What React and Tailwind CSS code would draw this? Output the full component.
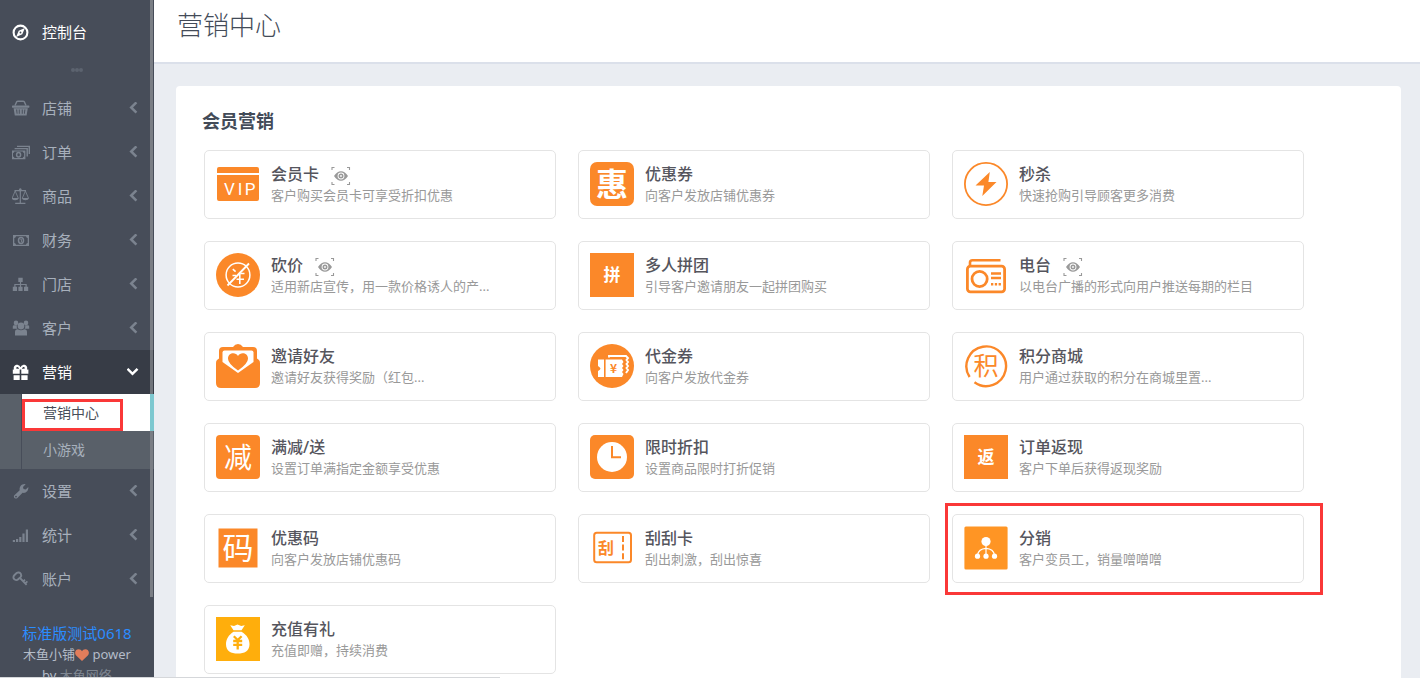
import React from 'react';

const cjk = '"Noto Sans CJK SC", sans-serif';

const Svg = ({ children, size = 18, className = '' }) => (
  <svg width={size} height={size} viewBox={`0 0 ${size} ${size}`} fill="currentColor" aria-hidden="true" className={`shrink-0 ${className}`}>
    {children}
  </svg>
);

/* ---------- sidebar icons, 18 x 18 ---------- */
const CompassIcon = () => (
  <Svg>
    <circle cx="8.5" cy="9.5" r="6.9" fill="none" stroke="currentColor" strokeWidth="2.1" />
    <path fillRule="evenodd" d="M12.9 5.1 10.3 11.3 4.1 13.9 6.7 7.7ZM8.5 8.6a.9.9 0 1 0 0 1.8.9.9 0 0 0 0-1.8Z" />
  </Svg>
);
const BasketIcon = () => (
  <Svg>
    <path d="M3 6.5 4.8 2.6Q5 2.2 6 2.2H11Q12 2.2 12.2 2.6L14 6.5" fill="none" stroke="currentColor" strokeWidth="1.4" />
    <rect x="0" y="6.6" width="17.4" height="2.1" rx="0.6" />
    <path fillRule="evenodd" d="M1.6 9.2H15.8L14.6 16.6H2.8ZM4.1 10.5 4.7 14.8H5.5L5.2 10.5ZM6.8 10.5V14.8H7.7V10.5ZM9.8 10.5V14.8H10.7V10.5ZM12.4 10.5 12 14.8H12.8L13.4 10.5Z" />
  </Svg>
);
const CashStackIcon = () => (
  <Svg>
    <path d="M5 3.4H17.3V11" fill="none" stroke="currentColor" strokeWidth="1.4" />
    <path d="M2.6 5.6H15.2V13.4" fill="none" stroke="currentColor" strokeWidth="1.4" />
    <path fillRule="evenodd" d="M-.3 7.4H13.4V16.3H-.3ZM2.4 8.6A1.6 1.6 0 0 1 1 10.1V13.6A1.6 1.6 0 0 1 2.4 15.1H10.7A1.6 1.6 0 0 1 12.1 13.6V10.1A1.6 1.6 0 0 1 10.7 8.6Z" />
    <ellipse cx="6.6" cy="11.8" rx="2" ry="2.3" fill="none" stroke="currentColor" strokeWidth="1.5" />
  </Svg>
);
const ScaleIcon = () => (
  <Svg>
    <path d="M8.3 1.5V16M2.5 3.6H14M3.2 16.3H13.4" fill="none" stroke="currentColor" strokeWidth="1.2" />
    <path d="M3.2 4 .1 11.2M3.2 4 6.3 11.2M13.4 4 10.3 11.2M13.4 4 16.5 11.2" fill="none" stroke="currentColor" strokeWidth="0.9" />
    <path d="M-.5 11H6.9Q6.2 13.3 3.2 13.3T-.5 11ZM9.7 11H17.1Q16.4 13.3 13.4 13.3T9.7 11Z" />
    <circle cx="8.3" cy="3" r="1.4" />
  </Svg>
);
const CashIcon = () => (
  <Svg>
    <path fillRule="evenodd" d="M1 4H17V15H1ZM4 5.3A2 2 0 0 1 2.3 7V12A2 2 0 0 1 4 13.7H14A2 2 0 0 1 15.7 12V7A2 2 0 0 1 14 5.3Z" />
    <ellipse cx="9" cy="9.5" rx="2.5" ry="2.9" fill="none" stroke="currentColor" strokeWidth="1.5" />
    <path d="M8.3 8.3H9.4V11" fill="none" stroke="currentColor" strokeWidth="1" />
  </Svg>
);
const SitemapIcon = () => (
  <Svg>
    <path d="M6.3 2.8H10.7V7H6.3ZM.8 11.8H5V16H.8ZM6.4 11.8H10.6V16H6.4ZM12 11.8H16.2V16H12Z" />
    <path d="M8.5 7V12M2.9 12V9.5H14.1V12" fill="none" stroke="currentColor" strokeWidth="1.2" />
  </Svg>
);
const UsersIcon = () => (
  <Svg>
    <circle cx="4" cy="3.9" r="2.3" />
    <circle cx="14" cy="3.9" r="2.3" />
    <path d="M.8 9.8V7.6Q.8 6.2 2.2 6.2H4.9Q4.3 8.3 5.4 9.8ZM17.2 9.8V7.6Q17.2 6.2 15.8 6.2H13.1Q13.7 8.3 12.6 9.8Z" />
    <circle cx="9" cy="7" r="3.4" />
    <path d="M3 16.6V13Q3 10.3 5.7 10.3Q9 12 12.3 10.3Q15 10.3 15 13V16.6Z" />
  </Svg>
);
const GiftIcon = () => (
  <Svg>
    <path fillRule="evenodd" d="M.8 6.5H2C.9 3.4 3.6 1.4 6 1.9Q7.8 2.3 8.5 4.2 9.2 2.3 11 1.9C13.4 1.4 16.1 3.4 15 6.5H16.4V10.8H9.3V6.5H7.7V10.8H.8ZM4.4 5.7H7.1C6.5 3.6 3.8 3.2 4.4 5.7ZM9.9 5.7H12.6C13.2 3.2 10.5 3.6 9.9 5.7Z" />
    <path d="M1.6 12.2H7.7V17H1.6ZM9.3 12.2H15.6V17H9.3Z" />
  </Svg>
);
const WrenchIcon = () => (
  <Svg>
    <path fillRule="evenodd" d="M2.4 13.2 7.7 8.3C7.1 4.6 9.8 1.6 13.6 2.2L11 4.9 11.5 7.1 13.7 7.5 16.3 5.1C16.8 8.8 13.8 11.6 10.6 10.8L5.4 16C3.3 17.7.8 15 2.4 13.2ZM4 13.7a.9.9 0 1 0 0 1.8.9.9 0 0 0 0-1.8Z" />
  </Svg>
);
const SignalIcon = () => (
  <Svg>
    <path d="M.8 14H3V16H.8ZM4 13H6.2V16H4ZM7.2 11H9.4V16H7.2ZM10.4 7.5H12.6V16H10.4ZM13.8 3.5H16V16H13.8Z" />
  </Svg>
);
const KeyIcon = () => (
  <Svg>
    <path d="M8.8 3.7A3 3 0 0 0 4.6 3L2.3 5.2A2.8 2.8 0 0 0 6.2 9.3L8.5 7.1A3 3 0 0 0 8.8 3.7Z" fill="none" stroke="currentColor" strokeWidth="1.9" />
    <path d="M8 8 14.6 14.8M11.3 11.3 13 9.6M13.2 13.4 15.4 11.4" fill="none" stroke="currentColor" strokeWidth="1.8" />
  </Svg>
);

const Chevron = ({ open }) => (
  <svg width="12" height="12" viewBox="0 0 12 12" fill="none" stroke="currentColor" strokeWidth="2.5" aria-hidden="true" className="shrink-0">
    <path d={open ? 'M.5 2.8 5.5 7.8 10.5 2.8' : 'M9.4.4 4.2 5.5 9.4 10.6'} />
  </svg>
);

/* ---------- card icons, 44 x 44 ---------- */
const Glyph = ({ x = 22, y, size, weight = 400, fill = '#fff', children }) => (
  <text x={x} y={y} fontSize={size} fontWeight={weight} fill={fill} textAnchor="middle" fontFamily={cjk}>
    {children}
  </text>
);
const O = '#fb8829';

const icons = {
  vip: (
    <>
      <path fill={O} d="M3 5H41Q43 5 43 7V11H1V7Q1 5 3 5ZM1 13H43V37Q43 39 41 39H3Q1 39 1 37Z" />
      <g fontSize="17" textAnchor="middle" fill="#fff" fontFamily={'"Liberation Sans Narrow", Roboto, sans-serif'}>
        <text x="13.5" y="33">V</text>
        <text x="24" y="33">I</text>
        <text x="34" y="33">P</text>
      </g>
    </>
  ),
  hui: (
    <>
      <rect width="44" height="44" rx="7" fill={O} />
      <Glyph y="34" size="32" weight="700">惠</Glyph>
    </>
  ),
  flash: (
    <>
      <circle cx="22" cy="22" r="21.1" fill="none" stroke={O} strokeWidth="1.8" />
      <path fill={O} d="M25.8 10 11.5 23.5H20L18.3 34 32.5 20H24.4Z" />
    </>
  ),
  bargain: (
    <>
      <circle cx="22" cy="22" r="22" fill={O} />
      <circle cx="22" cy="22" r="11.9" fill="none" stroke="#fff" strokeWidth="1.5" />
      <path d="M33 10.5 11.5 32.5" stroke="#fff" strokeWidth="1.8" />
      <path d="M16.8 16.2 19.6 18.6M16.5 22.5H20M24.5 20.5H28.5M20.5 26.2H28M23.8 20.5V31" fill="none" stroke="#fff" strokeWidth="1.6" />
    </>
  ),
  pin: (
    <>
      <rect width="44" height="44" fill={O} />
      <Glyph y="28" size="17" weight="700">拼</Glyph>
    </>
  ),
  radio: (
    <g fill="none" stroke={O}>
      <rect x="3.4" y="13.2" width="37.2" height="25.6" rx="3" strokeWidth="2.8" />
      <path d="M6 12V9.5Q6 7.2 8.5 7.2H36.5" strokeWidth="2.6" />
      <circle cx="15.6" cy="26" r="7.6" strokeWidth="2.8" />
      <path d="M27 20.5H37M27 25H37" strokeWidth="2.6" />
      <path d="M27 31.3H37" strokeWidth="2.6" strokeDasharray="2.3 1.5" />
    </g>
  ),
  invite: (
    <>
      <path fill={O} d="M3 14.5 1 16Q0 17 0 19V39Q0 44 5 44H39Q44 44 44 39V19Q44 17 43 16L41 14.5V7Q41 3 37 3H27Q25 0 22 0T17 3H7Q3 3 3 7Z" />
      <path fill="#fff" d="M6.5 18V8.5Q6.5 6.5 8.5 6.5H35.5Q37.5 6.5 37.5 8.5V18L22 29Z" />
      <path fill={O} d="M22 26.5Q12 19.5 12 14.7C12 8.7 19.5 7.7 22 12 24.5 7.7 32 8.7 32 14.7Q32 19.5 22 26.5Z" />
    </>
  ),
  voucher: (
    <>
      <circle cx="22" cy="22" r="22" fill={O} />
      <path fill="#fff" d="M8 15.5H14V33H8V27Q10.5 25.5 10.5 24.5T8 22ZM15.6 15.5H32L33.5 18 32 20 33.5 22 32 24 33.5 26 32 28 33.5 30 32 33H15.6Z" />
      <path fill="none" stroke="#fff" strokeWidth="1.9" d="M19 13.5V12H36L38 14 36.5 16 38 18 36.5 20 38 22 36.5 24 38 26 36 29" />
      <Glyph x="23.5" y="29" size="12" weight="700" fill={O}>¥</Glyph>
    </>
  ),
  points: (
    <>
      <path fill="none" stroke={O} strokeWidth="2.4" d="M5.6 33A19.8 19.8 0 1 1 10.5 38.2" />
      <Glyph y="31" size="25" fill={O}>积</Glyph>
    </>
  ),
  jian: (
    <>
      <rect width="44" height="44" rx="4" fill={O} />
      <Glyph y="33" size="28">减</Glyph>
    </>
  ),
  clock: (
    <>
      <rect width="44" height="44" rx="5" fill={O} />
      <circle cx="22" cy="22" r="15" fill="#fff" />
      <path d="M22 11V22.3H31" fill="none" stroke={O} strokeWidth="2" />
    </>
  ),
  fan: (
    <>
      <rect width="44" height="44" fill={O} />
      <Glyph y="28" size="17" weight="700">返</Glyph>
    </>
  ),
  code: (
    <>
      <rect x="2.5" y="2.5" width="39" height="39" fill={O} />
      <Glyph y="33" size="31">码</Glyph>
    </>
  ),
  scratch: (
    <>
      <rect x="4.2" y="6.8" width="36.8" height="29.5" rx="2.5" fill="none" stroke={O} strokeWidth="2" />
      <Glyph x="16" y="27.5" size="16" weight="700" fill={O}>刮</Glyph>
      <path d="M33 10V33.5" stroke={O} strokeWidth="2" strokeDasharray="6 2.6" />
    </>
  ),
  share: (
    <>
      <rect x="0.4" y="0.4" width="43.2" height="43.2" rx="1.5" fill="#ff9524" />
      <g fill="#fff">
        <circle cx="22" cy="15.5" r="4.6" />
        <circle cx="13.5" cy="30.2" r="2.6" />
        <circle cx="22" cy="30.2" r="2.6" />
        <circle cx="30.5" cy="30.2" r="2.6" />
      </g>
      <path d="M22 19V29M13.5 29Q14.5 22.8 22 22.3 29.5 22.8 30.5 29" fill="none" stroke="#fff" strokeWidth="1.2" />
    </>
  ),
  recharge: (
    <>
      <rect width="44" height="44" fill="#ffae0c" />
      <path fill="#fff" d="M14.2 8.2 18 9 21.5 7.5 25.2 9 28.8 8.2 25.5 13.2H17.5ZM17.5 14.8H25.5C31 18 33.5 22.5 33.5 27.2 33.5 34 28.5 36.5 21.7 36.5S10 34 10 27.2C10 22.5 12.5 18 17.5 14.8Z" />
      <path d="M17.8 19.2 21.7 23 25.6 19.2M17.2 24H26.2M17.2 27.8H26.2M21.7 22V32.5" fill="none" stroke="#ffae0c" strokeWidth="2.3" />
    </>
  ),
};

const EyeScan = () => (
  <svg width="20" height="20" viewBox="0 0 20 20" aria-hidden="true" className="mt-1 shrink-0 text-[#999]">
    <path d="M1 4V1.5H3.5M16 1.5H18.5V4M18.5 16V18.5H16M3.5 18.5H1V16" fill="none" stroke="currentColor" strokeWidth="1.1" />
    <path fill="currentColor" fillRule="evenodd" d="M3 10Q6 5.3 10 5.3T17 10Q14 14.7 10 14.7T3 10ZM10 6.6a3.4 3.4 0 1 0 0 6.8 3.4 3.4 0 0 0 0-6.8Z" />
    <circle cx="10" cy="10" r="1.7" fill="none" stroke="currentColor" strokeWidth="1.6" />
  </svg>
);

const cards = [
  { icon: 'vip', title: '会员卡', desc: '客户购买会员卡可享受折扣优惠', eye: true },
  { icon: 'hui', title: '优惠券', desc: '向客户发放店铺优惠券' },
  { icon: 'flash', title: '秒杀', desc: '快速抢购引导顾客更多消费' },
  { icon: 'bargain', title: '砍价', desc: '适用新店宣传，用一款价格诱人的产...', eye: true },
  { icon: 'pin', title: '多人拼团', desc: '引导客户邀请朋友一起拼团购买' },
  { icon: 'radio', title: '电台', desc: '以电台广播的形式向用户推送每期的栏目', eye: true },
  { icon: 'invite', title: '邀请好友', desc: '邀请好友获得奖励（红包...' },
  { icon: 'voucher', title: '代金券', desc: '向客户发放代金券' },
  { icon: 'points', title: '积分商城', desc: '用户通过获取的积分在商城里置...' },
  { icon: 'jian', title: '满减/送', desc: '设置订单满指定金额享受优惠' },
  { icon: 'clock', title: '限时折扣', desc: '设置商品限时打折促销' },
  { icon: 'fan', title: '订单返现', desc: '客户下单后获得返现奖励' },
  { icon: 'code', title: '优惠码', desc: '向客户发放店铺优惠码' },
  { icon: 'scratch', title: '刮刮卡', desc: '刮出刺激，刮出惊喜' },
  { icon: 'share', title: '分销', desc: '客户变员工，销量噌噌噌', marked: true },
  { icon: 'recharge', title: '充值有礼', desc: '充值即赠，持续消费' },
];

const Card = ({ icon, title, desc, eye, marked }) => (
  <li className="relative">
    <a href="#" className="flex h-[69px] items-start gap-[11px] rounded-[5px] border border-[#e4e4e4] bg-white px-[11px] pt-[11px]">
      <svg width="44" height="44" viewBox="0 0 44 44" aria-hidden="true" className="shrink-0">{icons[icon]}</svg>
      <div className="min-w-0">
        <h3 className="flex h-6 items-center gap-3 text-base font-medium leading-6 text-[#55555d]">
          {title}
          {eye && <EyeScan />}
        </h3>
        <p className="truncate text-[13px] leading-[18px] text-[#999]">{desc}</p>
      </div>
    </a>
    {marked && <span className="pointer-events-none absolute -bottom-3 -left-[7px] -right-[19px] -top-[11px] border-3 border-[#fa3838]" />}
  </li>
);

const before = [
  [BasketIcon, '店铺'],
  [CashStackIcon, '订单'],
  [ScaleIcon, '商品'],
  [CashIcon, '财务'],
  [SitemapIcon, '门店'],
  [UsersIcon, '客户'],
];
const after = [
  [WrenchIcon, '设置'],
  [SignalIcon, '统计'],
  [KeyIcon, '账户'],
];

const NavItem = ({ icon: Icon, label, open }) => (
  <button
    type="button"
    aria-expanded={!!open}
    className={`flex h-11 w-full items-center pl-3 pr-[15px] text-left text-[15px] ${open ? 'bg-[#373c46] text-white' : 'text-[#a7b0bc]'}`}
  >
    <span className={`mr-3 flex ${open ? '' : 'text-[#7b838f]'}`}><Icon /></span>
    <span className="flex-1">{label}</span>
    <span className={open ? '' : 'text-[#7b838f]'}><Chevron open={open} /></span>
  </button>
);

const Sidebar = () => (
  <aside className="relative w-[154px] shrink-0 overflow-hidden bg-[#474d59]">
    <nav>
      <a href="#" className="mt-[10px] flex h-11 items-center gap-3 pl-3 text-[15px] text-white">
        <CompassIcon />
        控制台
      </a>
      <div className="flex h-8 items-center justify-center">
        <i className="size-1 rounded-full bg-[#5c636f]" />
        <i className="size-1 rounded-full bg-[#5c636f]" />
        <i className="size-1 rounded-full bg-[#5c636f]" />
      </div>
      {before.map(([Icon, label]) => <NavItem key={label} icon={Icon} label={label} />)}
      <NavItem icon={GiftIcon} label="营销" open />
      <div className="bg-[#596069] pl-[21px]">
        <ul className="border-l border-[#474d59] text-sm">
          <li className="relative">
            <a href="#" className="flex h-[37px] items-center border-r-4 border-[#7dc8d0] bg-white pl-[21px] text-[#474d59]">营销中心</a>
            <span className="pointer-events-none absolute bottom-0 left-0 top-[5px] w-[101px] border-3 border-[#fa3838]" />
          </li>
          <li>
            <a href="#" className="flex h-[38px] items-center pl-[21px] text-[#a7b0bc]">小游戏</a>
          </li>
        </ul>
      </div>
      {after.map(([Icon, label]) => <NavItem key={label} icon={Icon} label={label} />)}
    </nav>
    <footer className="px-5 pt-[21px] text-center text-[13px] leading-[21px] text-[#b4bcc8]">
      <a href="#" className="block text-[15px] leading-[22px] text-[#2b8cff]">标准版测试0618</a>
      <p>
        木鱼小铺
        <svg width="14" height="12" viewBox="0 0 14 12" aria-label="爱心" className="inline align-[-2px]">
          <path fill="#e27d5b" d="M7 12 1.2 6.4C-1 4 .3.2 3.6.2 5.2.2 6.4 1 7 2.2 7.6 1 8.8.2 10.4.2 13.7.2 15 4 12.8 6.4Z" />
        </svg>{' '}
        power by <a href="#" className="text-[#7f8792]">木鱼网络</a>
      </p>
    </footer>
    <span className="absolute left-[150px] top-0 h-[350px] w-[3px] bg-[#7a7e85]" />
    <span className="absolute left-[150px] top-[350px] h-11 w-[3px] bg-[#70747b]" />
    <span className="absolute left-[150px] top-[431px] h-[166px] w-[3px] bg-[#7a7e85]" />
  </aside>
);

export default function App() {
  return (
    <div className="relative flex h-screen overflow-hidden bg-[#eaedf2] font-['Noto_Sans','Noto_Sans_CJK_SC',sans-serif]">
      <Sidebar />
      <main className="min-w-0 flex-1 overflow-y-auto [scrollbar-width:none]">
        <header className="flex h-16 border-b-2 border-[#dbe0ea] bg-white pl-[23px] pt-[7px]">
          <h1 className="text-[26px] font-light leading-9 text-[#434b58]">营销中心</h1>
        </header>
        <section className="ml-[22px] mr-[19px] mt-[22px] rounded-sm bg-white pb-10 pl-7 pr-[97px] pt-[23px]">
          <h2 className="-ml-0.5 mb-[17px] text-lg font-bold leading-6 text-[#434b58]">会员营销</h2>
          <ul className="grid grid-cols-3 gap-[22px]">
            {cards.map((c) => <Card key={c.title} {...c} />)}
          </ul>
        </section>
      </main>
      <span className="absolute bottom-0 left-0 h-px w-[500px] bg-[#d5d7da]" />
    </div>
  );
}
